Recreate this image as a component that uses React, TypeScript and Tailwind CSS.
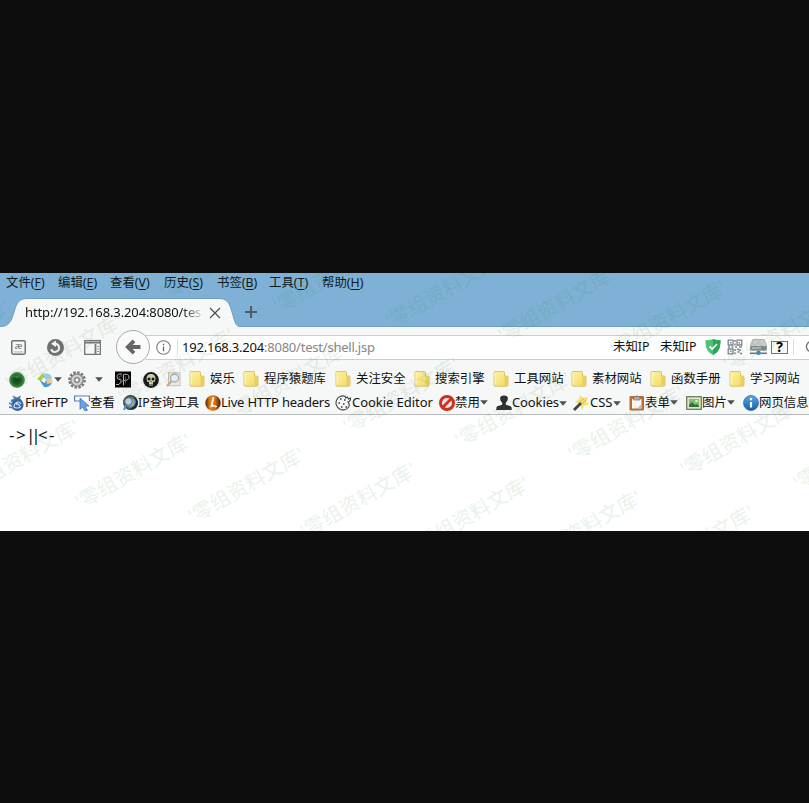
import React from 'react';

type Kids = { children: React.ReactNode };

const menus: [string, string, string][] = [
  ['文件', 'F', 'w-[52px]'],
  ['编辑', 'E', 'w-[52px]'],
  ['查看', 'V', 'w-[54px]'],
  ['历史', 'S', 'w-[53px]'],
  ['书签', 'B', 'w-[52px]'],
  ['工具', 'T', 'w-[53px]'],
  ['帮助', 'H', 'w-[52px]'],
];

const folders: [string, string][] = [
  ['娱乐', 'w-[54px]'],
  ['程序猿题库', 'w-[92px]'],
  ['关注安全', 'w-[79px]'],
  ['搜索引擎', 'w-[79px]'],
  ['工具网站', 'w-[78px]'],
  ['素材网站', 'w-[79px]'],
  ['函数手册', 'w-[79px]'],
  ['学习网站', 'w-[80px]'],
];

function Ico({ children, className = 'h-4 w-4' }: Kids & { className?: string }) {
  return (
    <svg viewBox="0 0 16 16" fill="none" className={`shrink-0 ${className}`}>
      {children}
    </svg>
  );
}

function Caret() {
  return (
    <svg viewBox="0 0 8 5" className="h-[5px] w-2 shrink-0 fill-[#505050]">
      <path d="M.2 .2h7.600L4 4.800z" />
    </svg>
  );
}

function Folder() {
  return (
    <Ico>
      <path d="M1 1.500q0-1 1-1h8.500q1 0 1 1V5H14q1 0 1 1v8q0 1.200-1.200 1.200H2q-1 0-1-1z" fill="url(#folder)" stroke="#d6b84c" strokeWidth=".8" />
      <path d="M11.500 5v7.500q0 1.800-1.500 2.200h3.500q1.300 0 1.300-1.300V5z" fill="#e8cf60" />
      <path d="M2 1.500v12" stroke="#fffbdc" strokeWidth=".9" />
    </Ico>
  );
}

function Defs() {
  return (
    <svg className="absolute h-0 w-0">
      <defs>
        <linearGradient id="folder" x1="0" y1="0" x2="1" y2="1">
          <stop stopColor="#fdf3a0" />
          <stop offset="1" stopColor="#f0d868" />
        </linearGradient>
        <linearGradient id="orange" x1="0" y1="0" x2="1" y2="0">
          <stop stopColor="#44210a" />
          <stop offset=".3" stopColor="#e87e12" />
          <stop offset=".65" stopColor="#d56a12" />
          <stop offset="1" stopColor="#351b10" />
        </linearGradient>
        <radialGradient id="globe">
          <stop stopColor="#d5e4ec" />
          <stop offset=".5" stopColor="#7fa0b0" />
          <stop offset="1" stopColor="#1d2d36" />
        </radialGradient>
        <radialGradient id="leaf">
          <stop stopColor="#123f1b" />
          <stop offset=".55" stopColor="#1f5c28" />
          <stop offset="1" stopColor="#4c9a4c" />
        </radialGradient>
        <linearGradient id="info" x1="0" y1="0" x2="0" y2="1">
          <stop stopColor="#5aa9e0" />
          <stop offset="1" stopColor="#135fa8" />
        </linearGradient>
      </defs>
    </svg>
  );
}

function TabBar() {
  return (
    <div className="flex h-[34px] items-end border-b border-[#6d9dbd]">
      <div className="relative -mb-px h-[29px] w-[240px] shrink-0">
        <svg viewBox="0 0 240 29" className="absolute inset-0 h-[29px] w-[240px]">
          <path d="M0 28.500C8 28.500 11 25 14 14C17 4 19 .5 28 .5H218C227 .5 229 4 232 14C235 25 236 28.500 240 28.500V29H0z" fill="#f6f7f7" />
          <path d="M0 28.500C8 28.500 11 25 14 14C17 4 19 .5 28 .5H218C227 .5 229 4 232 14C235 25 236 28.500 240 28.500" fill="none" stroke="#6f9fbe" strokeWidth="1" />
        </svg>
        <div className="relative flex h-full items-center pl-[25px]">
          <span className="w-[177px] overflow-hidden bg-gradient-to-r from-[#111] from-88% to-[#ddd] bg-clip-text pt-px text-[13px] tracking-[-0.12px] whitespace-nowrap text-transparent">
            http://192.168.3.204:8080/tes
          </span>
          <svg viewBox="0 0 12 12" className="ml-[7px] h-3 w-3 stroke-[#4d4d4d]">
            <path d="M1 1l10 10M11 1L1 11" strokeWidth="1.200" />
          </svg>
        </div>
      </div>
      <svg viewBox="0 0 12 12" className="mb-[8px] ml-[5px] h-3 w-3 stroke-[#4c5d69]">
        <path d="M6 0v12M0 6h12" strokeWidth="2" />
      </svg>
    </div>
  );
}

function NavBar() {
  return (
    <div className="flex h-[40px] items-center overflow-hidden bg-[#f6f7f7] pl-[11px]">
      <Ico className="h-[15px] w-[15px]">
        <rect x=".8" y=".8" width="14.400" height="14.400" rx="1.500" stroke="#717171" strokeWidth="1.600" />
        <text x="8" y="9.500" fontSize="12" textAnchor="middle" fill="#666" fontFamily="Liberation Serif">æ</text>
        <path d="M3 12.700h10" stroke="#aaa" />
      </Ico>
      <Ico className="ml-[21px] h-[17px] w-[17px]">
        <circle cx="8" cy="8" r="8" fill="#707070" />
        <path d="M7.500 4.500a3.800 3.800 0 1 1-3.600 5" stroke="#f6f7f7" strokeWidth="1.900" />
        <path d="M8.500 1.500v6L3.800 4.500z" fill="#f6f7f7" />
      </Ico>
      <svg viewBox="0 0 17 15" fill="none" className="ml-[20px] h-[15px] w-[17px] shrink-0" stroke="#757575">
        <path d="M.7.7h15.600v13.600H.7z" strokeWidth="1.300" />
        <path d="M1 2.600h15M11.500 4v10" strokeWidth="1.800" />
        <path d="M13 6.500h2M13 9h2M13 11.500h2" strokeWidth=".7" />
      </svg>
      <div className="z-10 ml-[15px] flex h-[34px] w-[34px] shrink-0 items-center justify-center rounded-full border border-[#a9a9a9] bg-[#fafafa]">
        <svg viewBox="0 0 16 16" className="h-4 w-4" fill="none" stroke="#666" strokeWidth="3.800">
          <path d="M15.500 8H3M9 1.800L2.800 8 9 14.200" />
        </svg>
      </div>
      <div className="-ml-[5px] flex h-[25px] w-[680px] shrink-0 items-center border-y border-[#c3d0d9] bg-white pl-[11px]">
        <Ico className="h-[15px] w-[15px]">
          <circle cx="8" cy="8" r="7.200" stroke="#777" strokeWidth="1.100" />
          <path d="M8 7v5M8 4v1.500" stroke="#666" strokeWidth="1.400" />
        </Ico>
        <div className="ml-[6px] h-4 w-px bg-[#ddd]" />
        <div className="ml-[4px] w-[431px] pt-[2px] text-[13px] tracking-[-0.22px] whitespace-nowrap text-[#858585]">
          <span className="text-[#111]">192.168.3.204</span>:8080/test/shell.jsp
        </div>
        <span className="w-[47px] pt-px text-[12.400px] whitespace-nowrap text-[#111]">未知IP</span>
        <span className="w-[45px] pt-px text-[12.400px] whitespace-nowrap text-[#111]">未知IP</span>
        <Ico>
          <path d="M.5 1Q5 1.500 8 0q3 1.500 7.500 1c0 8-1.500 12-7.500 15C2 13 .5 9 .5 1" fill="#4fc27a" />
          <path d="M8 0q3 1.500 7.500 1c0 8-1.500 12-7.500 15z" fill="#2da65a" />
          <path d="M4.500 7.500L7.200 10 12 5" stroke="#fff" strokeWidth="1.800" />
        </Ico>
        <Ico className="ml-[6px] h-4 w-4">
          <path d="M1.200 1.200h4.800v4.800H1.200zM10 1.200h4.800v4.800H10zM1.200 10h4.800v4.800H1.200z" stroke="#7c858e" strokeWidth="1.300" />
          <path d="M3 3.700h1.500M11.500 3.700H13M3 12.200h1.500M8 1v2M8 4.500v2M1 8h2M4.500 8h2M8 8h2M12 8h3M8 10v2M8 13.500v1.500M10 10.500h2M13 10v2M10.500 13h2M13 14.500h2" stroke="#7c858e" strokeWidth="1.500" />
        </Ico>
        <svg viewBox="0 0 17 16" fill="none" className="ml-[7px] h-4 w-[17px] shrink-0">
          <path d="M3 .5h11L16.500 6v5H.5V6z" fill="#c9cbcc" stroke="#9b9d9e" strokeWidth=".7" />
          <path d="M.5 7h16v4.500H.5z" fill="#85888a" />
          <path d="M2 9h9" stroke="#ddd" />
          <path d="M0 14.300h17" stroke="#777" strokeWidth="1.600" />
          <circle cx="8.500" cy="13.700" r="2.200" fill="#3c8dc2" />
        </svg>
        <div className="ml-[4px] flex h-[13px] w-[17px] shrink-0 items-center justify-center border border-[#6b7781] bg-[#f8f8f5] text-[14px] leading-none font-bold text-black">?</div>
        <div className="ml-[5px] h-4 w-px bg-[#ddd]" />
        <Ico className="ml-[11px] h-[15px] w-[15px]">
          <circle cx="7" cy="7" r="5.500" stroke="#777" strokeWidth="1.500" />
        </Ico>
      </div>
    </div>
  );
}

function BookmarksBar() {
  return (
    <div className="flex h-[25px] items-center overflow-hidden pl-[9px]">
      <Ico>
        <circle cx="8" cy="8" r="7.900" fill="url(#leaf)" />
        <path d="M3 5q5-3 10 0-4-1-5 2-1-3-5-2" fill="#439447" opacity=".7" />
      </Ico>
      <Ico className="ml-[12px] h-4 w-4">
        <path d="M0 7l6-6 3 3-4 6z" fill="#a9cf3c" />
        <path d="M6 2q8-2 9 5l-6 2z" fill="#8fcdf0" />
        <path d="M3 9q3-4 7-1l5.500 1q-2 7-8.500 6z" fill="#4c96d6" />
        <path d="M9 7l6-1v5l-5 1z" fill="#efc98a" />
        <path d="M6 6l3 1-1 4-4-2z" fill="#fff" />
      </Ico>
      <div className="ml-px flex"><Caret /></div>
      <Ico className="ml-[6px] h-[18px] w-[18px]">
        <circle cx="8" cy="8" r="6.700" stroke="#777" strokeWidth="2.200" strokeDasharray="2.200 1.300" />
        <circle cx="8" cy="8" r="5.500" fill="#bdbdbd" stroke="#858585" />
        <circle cx="8" cy="8" r="3.800" stroke="#e4e4e4" strokeWidth=".8" />
        <circle cx="8" cy="8" r="2" fill="#f6f7f7" stroke="#777" />
      </Ico>
      <div className="ml-[9px] flex"><Caret /></div>
      <Ico className="ml-[12px] h-[17px] w-4">
        <rect width="16" height="16" fill="#050505" />
        <path d="M7 2.500Q2 2 2 5t3 3-1 5H1M8.500 14V3q5.500-1 5.500 2.500T9 9" stroke="#b0b0b0" strokeWidth="1" />
        <path d="M7.500 4.500Q4 4 4 5.500t2.500 3T5 12M10.500 12V5" stroke="#666" strokeWidth=".8" />
      </Ico>
      <Ico className="ml-[12px] h-4 w-4">
        <circle cx="8" cy="8" r="7.900" fill="#171714" />
        <path d="M3.500 7q0-5 4.500-5t4.500 5l-1 3H10v4H6v-4H4.500z" fill="#d4d0ad" />
        <circle cx="6" cy="7" r="1.500" fill="#111" />
        <circle cx="10" cy="7" r="1.500" fill="#111" />
        <path d="M8 9v1M7 12v2M9 12v2" stroke="#222" />
      </Ico>
      <Ico className="ml-[6px] h-4 w-[17px]">
        <path d="M3 .7h11.500v13H3z" fill="#ede8dc" stroke="#c8bfae" />
        <circle cx="9" cy="6" r="4" fill="#e2eff5" stroke="#a3adb3" strokeWidth="1.300" />
        <path d="M6 9l-4.500 5" stroke="#c8a878" strokeWidth="2" />
      </Ico>
      <div className="ml-[7px] flex">
        {folders.map(([name, width]) => (
          <div key={name} className={`flex shrink-0 items-center ${width}`}>
            <Folder />
            <span className="ml-[5px] text-[12.400px] whitespace-nowrap">{name}</span>
          </div>
        ))}
      </div>
    </div>
  );
}

function Tool({ icon, label, width, caret, latin }: { icon: React.ReactNode; label: string; width: string; caret?: boolean; latin?: string }) {
  return (
    <div className={`flex shrink-0 items-center ${width}`}>
      <Ico>{icon}</Ico>
      <span className={`whitespace-nowrap ${latin ?? 'pt-px text-[12.400px]'}`}>{label}</span>
      {caret && <Caret />}
    </div>
  );
}

function ToolsBar() {
  return (
    <div className="flex h-[22px] items-center overflow-hidden pl-[9px]">
      <Tool width="w-[65px]" label="FireFTP" latin="text-[13px] tracking-[-0.2px]" icon={<>
        <path d="M2 7Q1 4 5 4L3.500.5 8 2.500l4-2-1 3q3 2 1 5" fill="#4d78b2" />
        <circle cx="8.500" cy="10" r="6" fill="#3565a6" />
        <path d="M12 9q-3-4-6 0t2 4 2-3-2 0" stroke="#dce9f8" strokeWidth="1.200" />
        <path d="M0 8l4 2M0 12l4 1" stroke="#4d78b2" strokeWidth="1.500" />
      </>} />
      <Tool width="w-[48px]" label="查看" icon={<>
        <path d="M6 6H.6V1h14.800v5" fill="#fff" stroke="#527dc2" strokeWidth="1.200" />
        <path d="M6 3l9 8-4 .2 2.500 4-2.500.8L8.500 12 6 14.500z" fill="#6ca1e1" stroke="#3f6da9" strokeWidth=".7" />
      </>} />
      <Tool width="w-[83px]" label="IP查询工具" icon={<>
        <circle cx="8.500" cy="7.500" r="7.400" fill="url(#globe)" />
        <path d="M11 2q6 5 0 10l-3 2q7 2 8-6-1-5-5-6" fill="#182b38" />
        <circle cx="6.500" cy="6.500" r="3.800" fill="#b9ced9" stroke="#526a77" />
        <path d="M4 10l-2 5" stroke="#3a9ac8" strokeWidth="2" />
      </>} />
      <Tool width="w-[130px]" label="Live HTTP headers" latin="text-[13px] tracking-[-0.22px]" icon={<>
        <circle cx="8" cy="8" r="7.700" fill="url(#orange)" />
        <path d="M8.500 2L6.500 11q3-1 5 1" stroke="#fff2d7" strokeWidth="2" />
      </>} />
      <Tool width="w-[104px]" label="Cookie Editor" latin="pl-px text-[13px] tracking-[-0.05px]" icon={<>
        <path d="M10 1.200A7 7 0 1 0 13.700 12Q15 9 13 7q3-1 2.500-4l-2 1-1-2-2 1z" fill="#f8f8f8" stroke="#444" strokeWidth="1.100" />
        <path d="M5 4h1.500M9 5h1.500M3.500 8H5M8 9h1.500M6 12h1.500M10.500 12H12" stroke="#333" strokeWidth="1.700" />
      </>} />
      <Tool width="w-[57px]" label="禁用" caret icon={<>
        <circle cx="8" cy="8" r="6.500" fill="#f4e9e6" stroke="#cf2e20" strokeWidth="3" />
        <path d="M3.500 12.500l9-9" stroke="#cf2e20" strokeWidth="2.800" />
      </>} />
      <Tool width="w-[77px]" label="Cookies" caret latin="text-[13px] tracking-[-0.12px]" icon={<path d="M8 .5c3.500 0 4.500 2 3.500 5L9.800 8v1.700l5 1.600q1 .7 1 3.700H.2q0-3 1-3.700l5-1.600V8L4.500 5.500C3.500 2.500 4.500.5 8 .5" fill="#303030" />} />
      <Tool width="w-[56px]" label="CSS" caret latin="pl-px text-[13px]" icon={<>
        <path d="M7 0l3 3 5-1-2 4 3 4-5 .5L9 15 7 9 2 7l4-3z" fill="#f7e16b" />
        <path d="M1 15L12 4" stroke="#444" strokeWidth="2.800" />
        <path d="M8 8l4.500-4.500" stroke="#eddc8a" strokeWidth="2.800" />
      </>} />
      <Tool width="w-[57px]" label="表单" caret icon={<>
        <rect x=".5" y="1" width="14.500" height="14.500" rx="1" fill="#bd6c32" />
        <path d="M3 4h9.500v9.500H3z" fill="#f8f6f0" />
        <path d="M8.500 13.500h4v-4.500z" fill="#b8bbb9" />
        <path d="M4.500 2h2.500q1-3 2 0H11v3H4.500z" fill="#a9b1b7" stroke="#78736f" strokeWidth=".7" />
      </>} />
      <Tool width="w-[57px]" label="图片" caret icon={<>
        <rect x=".7" y="1.700" width="14.600" height="12.600" fill="#dce5ce" stroke="#5f7b50" strokeWidth="1.200" />
        <path d="M3 4h10v8H3z" fill="#86b97b" />
        <path d="M3 12v-2l3-3 3 3 2-1 2 2v1" fill="#2e7430" />
        <circle cx="10.500" cy="6" r="1.300" fill="#f3edaa" />
      </>} />
      <Tool width="w-[70px]" label="网页信息" icon={<>
        <circle cx="8" cy="8" r="7.500" fill="url(#info)" stroke="#2368a4" strokeWidth=".7" />
        <path d="M8 7v5.500M8 3v2.200" stroke="#fff" strokeWidth="2.200" />
      </>} />
    </div>
  );
}

// Lattice of diagonal watermarks laid over the browser window.
function Watermarks() {
  const marks: { x: number; y: number }[] = [];
  for (let row = -1; row <= 3; row++) {
    for (let col = -3; col <= 8; col++) {
      const x = 77 + col * 112.5 + row * 42.5;
      const y = 231 + col * 14.3 - row * 105;
      if (x > -110 && x < 809 && y > 5 && y < 320) marks.push({ x, y });
    }
  }
  return (
    <div className="pointer-events-none absolute inset-0 z-20 overflow-hidden">
      {marks.map(({ x, y }) => (
        <span
          key={`${x},${y}`}
          className="absolute origin-left -translate-y-1/2 -rotate-[30deg] text-[20px] leading-none font-medium tracking-[0.1px] whitespace-nowrap text-[#3a8048]/[.11]"
          style={{ left: x, top: y }}
        >
          '零组资料文库'
        </span>
      ))}
    </div>
  );
}

export default function App() {
  return (
    <div className="h-[803px] w-[809px] overflow-hidden bg-[#0d0d0d] pt-[273px] font-['Noto_Sans','Noto_Sans_CJK_SC',sans-serif] text-[#111]">
      <Defs />
      <div className="relative h-[258px] overflow-hidden bg-white">
        <div className="h-[54px] bg-[#7eb1d5]">
          <div className="flex h-[20px] items-center pl-[6px] text-[12.400px] text-[#101820]">
            {menus.map(([name, key, width]) => (
              <span key={key} className={`shrink-0 whitespace-nowrap ${width}`}>
                {name}(<span className="underline underline-offset-2">{key}</span>)
              </span>
            ))}
          </div>
          <TabBar />
        </div>
        <NavBar />
        <div className="h-[48px] border-b border-[#b9bcbe] bg-[#f6f7f7]">
          <BookmarksBar />
          <ToolsBar />
        </div>
        <div className="flex px-[9px] pt-[8px] text-[16px] leading-6">
          <span className="w-[7px] text-[17px]">-</span>
          <span className="w-[10px] text-[17px]">&gt;</span>
          <span className="w-[12px] text-[17px] tracking-[-4px]">||</span>
          <span className="w-[11px] text-[17px]">&lt;</span>
          <span className="text-[17px]">-</span>
        </div>
        <Watermarks />
      </div>
    </div>
  );
}
